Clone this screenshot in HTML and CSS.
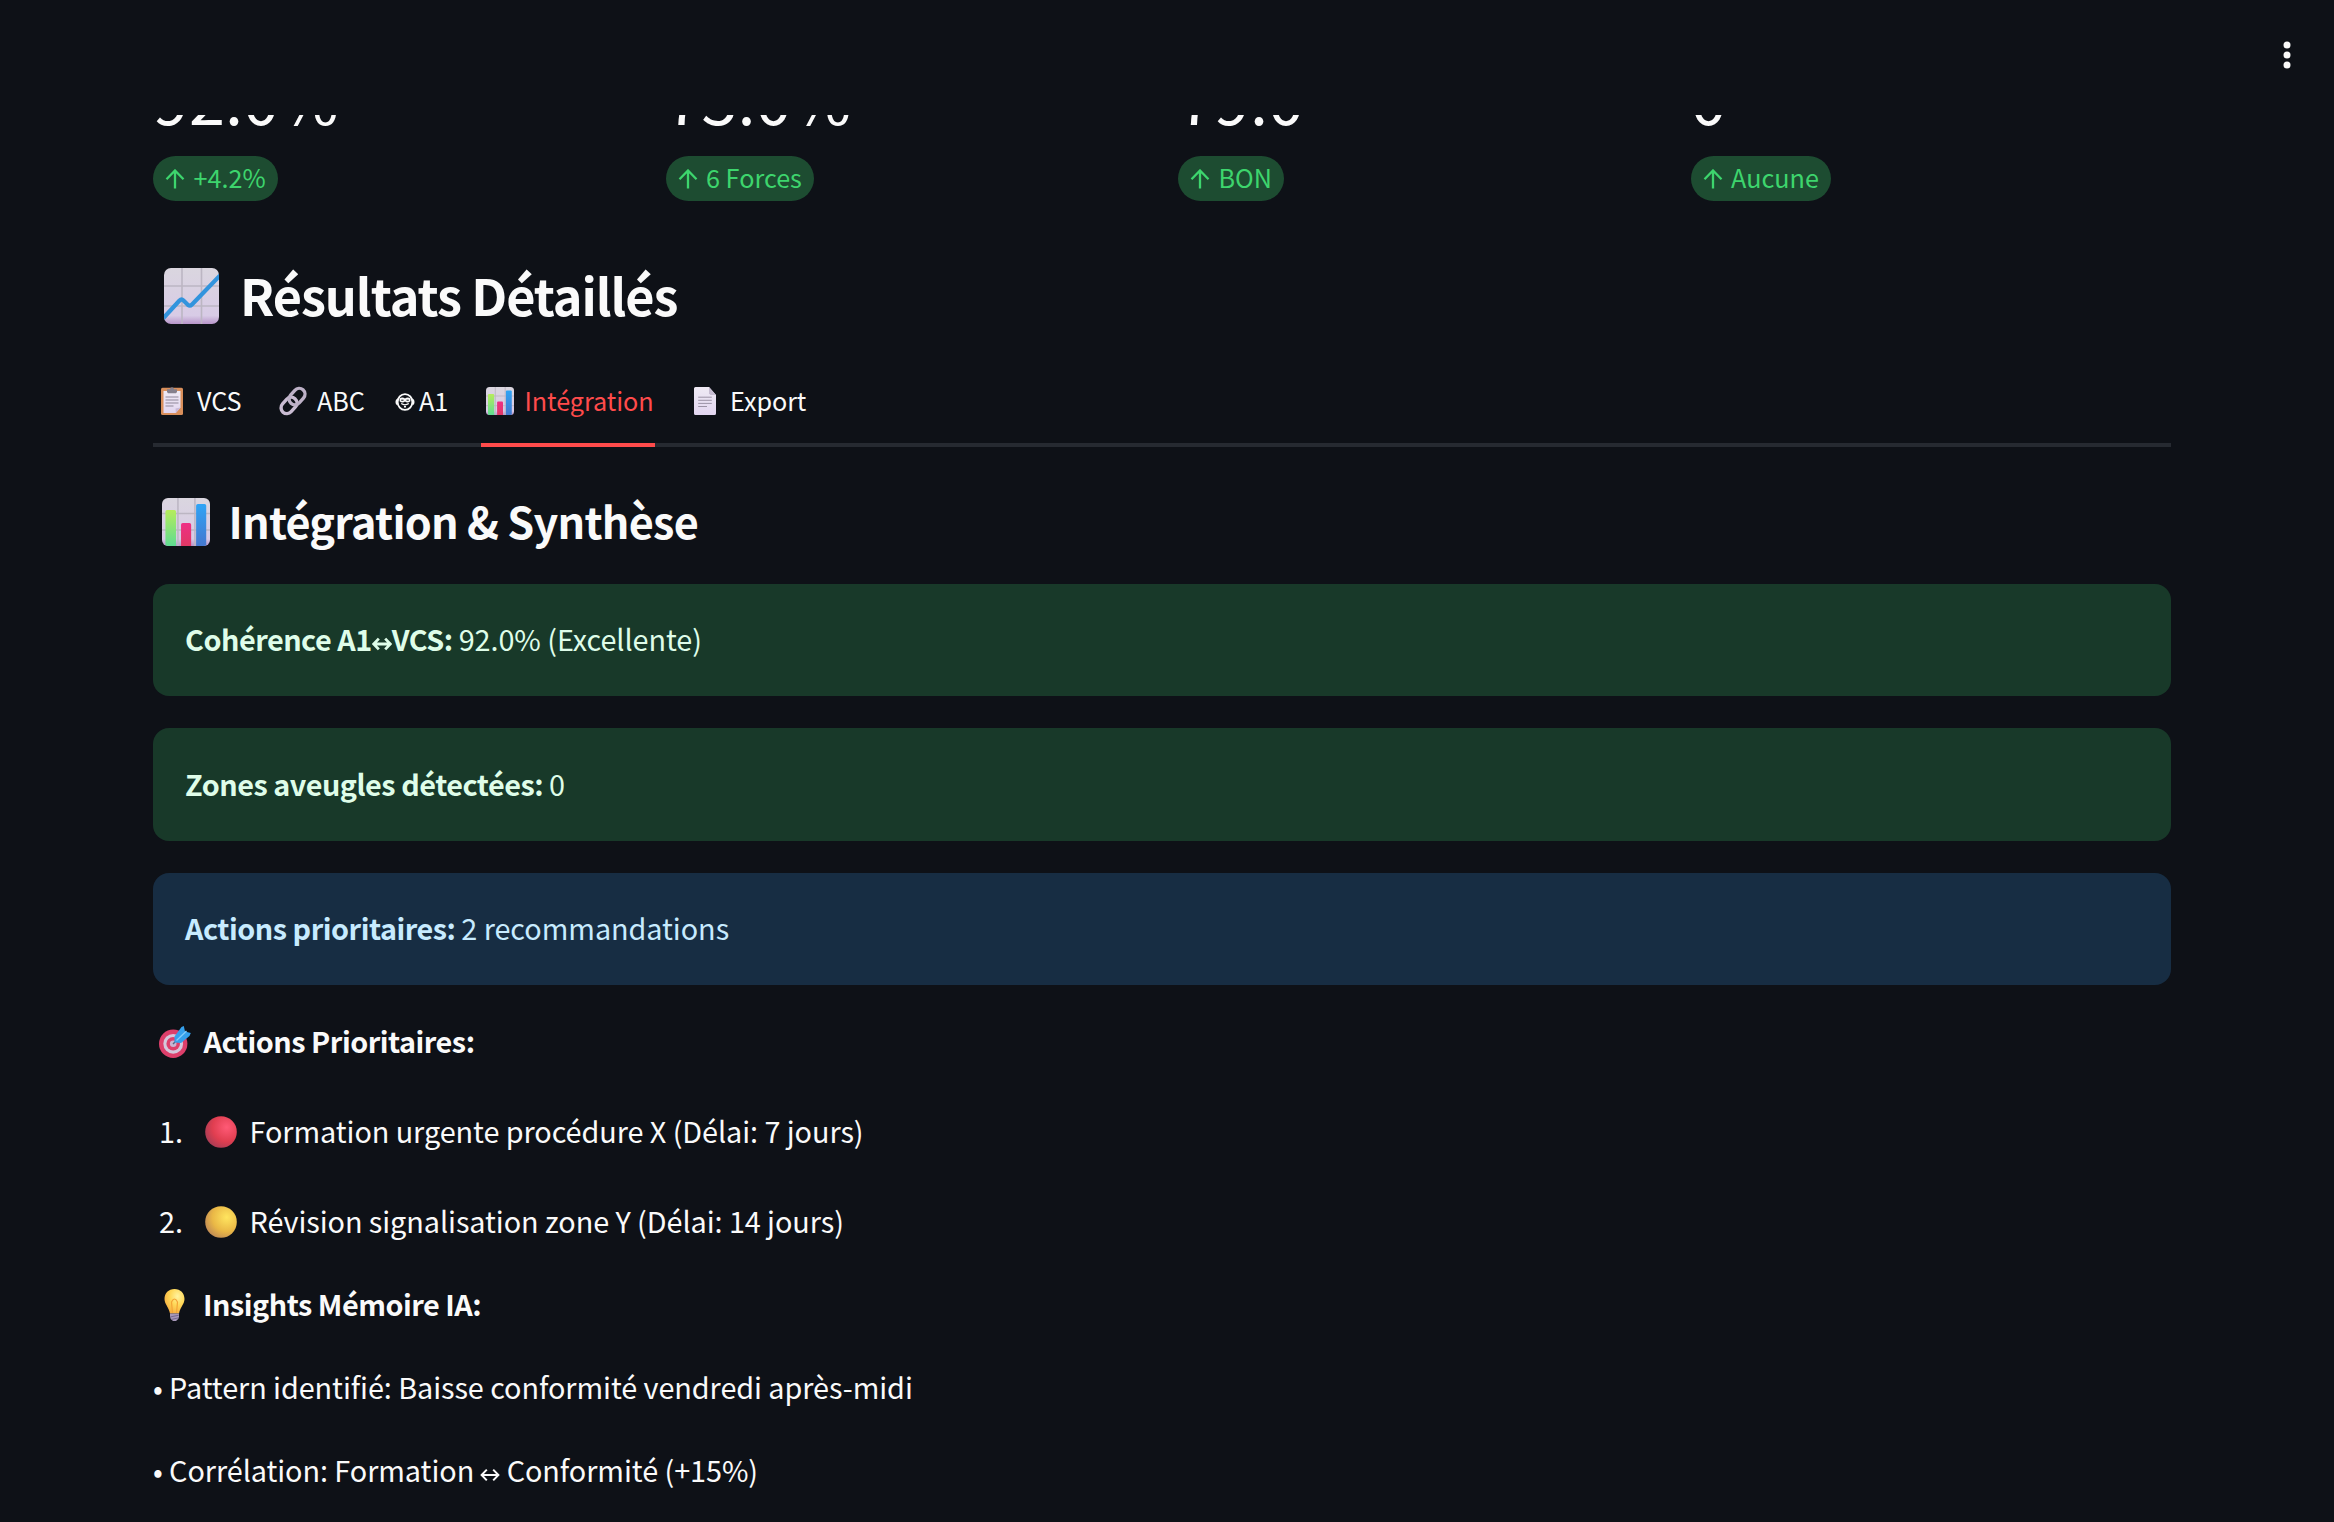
FILE: index.html
```html
<!DOCTYPE html>
<html lang="fr">
<head>
<meta charset="utf-8">
<title>Résultats Détaillés</title>
<link rel="stylesheet" href="styles.css">
</head>
<body>
<svg class="defs" width="0" height="0" aria-hidden="true">
  <defs>
    <linearGradient id="paper" x1="0" y1="0" x2="0" y2="1"><stop offset="0" stop-color="#dad6df"/><stop offset=".85" stop-color="#d8cbe6"/><stop offset="1" stop-color="#b795c9"/></linearGradient>
    <linearGradient id="sheet" x1="0" y1="0" x2="0" y2="1"><stop offset="0" stop-color="#efeaf4"/><stop offset="1" stop-color="#e2d6f0"/></linearGradient>
    <linearGradient id="green" x1="0" y1="0" x2="0" y2="1"><stop offset="0" stop-color="#b6ec5c"/><stop offset="1" stop-color="#5fdc92"/></linearGradient>
    <linearGradient id="blue" x1="0" y1="0" x2="0" y2="1"><stop offset="0" stop-color="#2fa4f5"/><stop offset="1" stop-color="#4478cf"/></linearGradient>
    <linearGradient id="pink" x1="0" y1="0" x2="0" y2="1"><stop offset="0" stop-color="#ee2f85"/><stop offset="1" stop-color="#e03864"/></linearGradient>
    <radialGradient id="red" cx=".68" cy=".35" r=".75"><stop offset="0" stop-color="#ff5a76"/><stop offset=".6" stop-color="#e03e50"/><stop offset="1" stop-color="#a83c55"/></radialGradient>
    <radialGradient id="yellow" cx=".68" cy=".35" r=".75"><stop offset="0" stop-color="#ffe55f"/><stop offset=".6" stop-color="#eab846"/><stop offset="1" stop-color="#c08a55"/></radialGradient>
    <radialGradient id="glow" cx=".65" cy=".3" r=".8"><stop offset="0" stop-color="#fff3a0"/><stop offset=".45" stop-color="#ffd858"/><stop offset="1" stop-color="#f5a73c"/></radialGradient>
    <clipPath id="chart"><rect width="55" height="56" rx="7"/></clipPath>
    <symbol id="bars" viewBox="0 0 28 28">
      <rect width="28" height="28" rx="3.5" fill="url(#paper)"/>
      <path d="M9.3 0v28M19.2 0v28M0 9h28M0 18.7h28" stroke="#bcb6c3" stroke-width=".9"/>
      <path d="M2 8a1 1 0 0 1 1-1h4.200a1 1 0 0 1 1 1v20H3.500L2 27.600z" fill="url(#green)"/>
      <path d="M11.100 15.600a1 1 0 0 1 1-1h3.900a1 1 0 0 1 1 1V28h-5.900z" fill="url(#pink)"/>
      <path d="M19.900 4.500a1 1 0 0 1 1-1h3.900a1 1 0 0 1 1 1v23.100L24.500 28h-4.600z" fill="url(#blue)"/>
    </symbol>
    <symbol id="up" viewBox="0 0 20 20"><path d="M10 19.500V2M1.500 10.300 10 1.500l8.500 8.800" fill="none" stroke="currentColor" stroke-width="2.300"/></symbol>
    <symbol id="both" viewBox="0 0 20 14"><path d="M2 7h16M6.800 1.600 1.600 7l5.200 5.400M13.200 1.600 18.400 7l-5.200 5.400" fill="none" stroke="currentColor"/></symbol>
  </defs>
</svg>

<header class="toolbar">
  <svg class="menu" viewBox="0 0 8 28"><circle cx="4" cy="4" r="3.500"/><circle cx="4" cy="14" r="3.500"/><circle cx="4" cy="24" r="3.500"/></svg>
</header>

<main class="content">
  <section class="metrics">
    <div class="metric"><div class="value">92.0%</div><div class="delta"><svg class="up"><use href="#up"/></svg><span>+4.2%</span></div></div>
    <div class="metric"><div class="value">75.0%</div><div class="delta"><svg class="up"><use href="#up"/></svg><span>6 Forces</span></div></div>
    <div class="metric"><div class="value">79.0</div><div class="delta"><svg class="up"><use href="#up"/></svg><span>BON</span></div></div>
    <div class="metric"><div class="value">0</div><div class="delta"><svg class="up"><use href="#up"/></svg><span>Aucune</span></div></div>
  </section>

  <h2 class="title">
    <svg class="title-icon" viewBox="0 0 55 56">
      <g clip-path="url(#chart)">
      <rect width="55" height="56" fill="url(#paper)"/>
      <path d="M18 0v56M37.500 0v56M0 18h55M0 38h55" stroke="#bcb6c3" stroke-width="1.600"/>
      <path d="M-1 50.500 15.500 32.500q2-2 4 0l4.500 4.500q2 1.500 4-.5L57 6.500" fill="none" stroke="#3294dd" stroke-width="4.200"/>
      </g>
    </svg>
    <span>Résultats Détaillés</span>
  </h2>

  <nav class="tabs">
    <a class="tab tab-vcs"><svg class="page-icon" viewBox="0 0 22 28">
      <rect y=".8" width="22" height="27.200" rx="1.500" fill="#d98f5b"/>
      <path d="M2.500 4h17v16.500L14.800 26H2.500z" fill="url(#sheet)"/><path d="M19.500 20.500 14.800 26l-.3-4.500z" fill="#c9b9d8"/>
      <path d="M4.500 10h13M4.500 13h13M4.500 16h13M4.500 19h8" stroke="#8f8799" stroke-width="1"/>
      <path d="M6 2.200h3a2 2 0 0 1 4 0h3V5l-1 1.200H7L6 5z" fill="#85808c"/></svg><span>VCS</span></a>
    <a class="tab tab-abc"><svg class="link-icon" viewBox="0 0 28 28">
      <g fill="none" stroke="#c9bcd2" stroke-width="3.400" transform="rotate(-48 14 14)"><rect x="-1" y="8.200" width="18" height="11.600" rx="5.800"/><rect x="11" y="8.200" width="18" height="11.600" rx="5.800" stroke="#bdb1c7"/></g></svg><span>ABC</span></a>
    <a class="tab tab-a1"><svg class="face-icon" viewBox="0 0 20 18">
      <g fill="none" stroke="#fafafa"><ellipse cx="10" cy="9" rx="7.400" ry="7.900" stroke-width="1.900"/><path d="M2.400 6.500Q1.200 7 1.200 9t1.200 2.500M17.600 6.500q1.200.5 1.200 2.500t-1.200 2.500" stroke-width="1.500"/><path d="M6.200 10.600q3.800 2.400 7.600 0" stroke-width="1.200"/></g><path d="M4.600 5.600q2.700-2 5.400 0 2.700-2 5.400 0v2.600q-2.700 2.200-5.400.3-2.700 1.900-5.400-.3z" fill="#fafafa"/><path d="M6.200 7.200h2.300M11.500 7.200h2.300" stroke="#0e1117" stroke-width="1"/><path d="M9 13.700h2" stroke="#fafafa" stroke-width="1.600"/></svg><span>A1</span></a>
    <a class="tab tab-int active"><svg class="bars-icon"><use href="#bars"/></svg><span>Intégration</span></a>
    <a class="tab tab-export"><svg class="page-icon" viewBox="0 0 22 28">
      <path d="M1.500 0H15l7 8v18.500a1.500 1.500 0 0 1-1.500 1.500h-19A1.500 1.500 0 0 1 0 26.500v-25A1.500 1.500 0 0 1 1.500 0z" fill="url(#sheet)"/><path d="M15 0v6.500L16.500 8H22z" fill="#c7bdd2"/>
      <path d="M4.200 10.200h13.600M4.200 13.300h13.600M4.200 16.400h13.600M4.200 19.500h8.800" stroke="#9b93a6" stroke-width="1"/></svg><span>Export</span></a>
  </nav>

  <h3 class="subtitle"><svg class="sub-icon"><use href="#bars"/></svg><span>Intégration &amp; Synthèse</span></h3>

  <div class="alerts">
    <div class="alert success"><b>Cohérence A1<svg class="both"><use href="#both"/></svg>VCS:</b><span>92.0% (Excellente)</span></div>
    <div class="alert success zones"><b>Zones aveugles détectées:</b><span>0</span></div>
    <div class="alert info"><b>Actions prioritaires:</b><span>2 recommandations</span></div>
  </div>

  <p class="row strong row-actions">
    <svg class="emoji target" viewBox="0 0 32 32">
      <circle cx="14.200" cy="17.800" r="14.200" fill="#dd3f6b"/><circle cx="14.200" cy="17.800" r="9.900" fill="#d5c7dc"/><circle cx="14.200" cy="17.800" r="6.800" fill="#dd3f6b"/><circle cx="14.200" cy="17.800" r="3.300" fill="#c9b4d2"/>
      <path d="m14 18 9-9" stroke="#54657f" stroke-width="1.500"/><path d="M15.500 16.500v-6L22.500 1l2.300-1 1.200 5.500 5.800 1.400-1.300 3.200-8.500 7z" fill="#35a0ec"/><path d="m17.500 14.500 10-9.500" stroke="#83ccfa" stroke-width="1.300"/></svg>
    <span>Actions Prioritaires:</span></p>
  <div class="list">
    <div class="item"><span class="num">1.</span><svg class="dot" viewBox="0 0 32 32"><circle cx="16" cy="16" r="15.800" fill="url(#red)"/></svg><span>Formation urgente procédure X (Délai: 7 jours)</span></div>
    <div class="item"><span class="num">2.</span><svg class="dot" viewBox="0 0 32 32"><circle cx="16" cy="16" r="15.800" fill="url(#yellow)"/></svg><span>Révision signalisation zone Y (Délai: 14 jours)</span></div>
  </div>
  <p class="row strong row-insights">
    <svg class="emoji bulb" viewBox="0 0 21 32">
      <path d="M10.500 0C4.500 0 .5 4.300.5 10c0 5 4 7.500 5.500 14.500h9C16.500 17.500 20.500 15 20.500 10c0-5.700-4-10-10-10z" fill="url(#glow)"/><path d="M8.500 24 7.500 13q3-6 6 0l-1 11" fill="none" stroke="#f3a537" stroke-width="1.200"/>
      <path d="M6 24.500h9v3l-.7 2.500-2.300 2H9l-2.300-2-.7-2.500z" fill="#a697b8"/><path d="m6.200 28 8.600-1.800M7 30.500l7.300-1.600" stroke="#75678c" stroke-width="1"/></svg>
    <span>Insights Mémoire IA:</span></p>
  <p class="row">• Pattern identifié: Baisse conformité vendredi après-midi</p>
  <p class="row correlation">• Corrélation: Formation<svg class="both"><use href="#both"/></svg>Conformité (+15%)</p>
</main>
</body>
</html>
```
FILE: styles.css
```css
* { box-sizing: border-box; }
html, body { height: 100%; }
body {
  margin: 0;
  background: #0e1117;
  color: #fafafa;
  font-family: "Noto Sans CJK JP", "Noto Sans", sans-serif;
  font-size: 28.8px;
  line-height: 48px;
  letter-spacing: -0.06px;
  overflow: hidden;
  display: flex;
  flex-direction: column;
}
.defs { display: block; flex: none; height: 0; }
svg { display: block; flex: none; overflow: visible; }
span, b { white-space: nowrap; }
.toolbar { flex: none; height: 115px; padding: 41px 43px 0 0; display: flex; justify-content: flex-end; }
.menu { width: 8px; height: 28px; fill: #fafafa; }
.content { flex: 1; min-height: 0; overflow: hidden; padding: 0 163px 0 153px; }

.metrics { display: grid; grid-template-columns: repeat(4, 1fr); gap: 32px; }
.value { font-size: 64.8px; line-height: 80px; margin: -58px 0 19px; letter-spacing: 0; }
.delta {
  display: flex; width: fit-content; align-items: center; gap: 8.5px; height: 45px;
  padding: 0 12.5px 0 12px; border-radius: 22.5px;
  background: #1d4c31; color: #3dd56d; font-size: 25.2px; line-height: 44px;
  letter-spacing: 0;
}
.delta span { margin-top: -3px; }
.up { width: 20px; height: 20px; }

.title { display: flex; align-items: center; margin: 64px 0 0; padding-left: 11px; height: 60px; font-size: 50.4px; line-height: 60px; font-weight: 700; letter-spacing: -1.06px; }
.title-icon { width: 55px; height: 56px; margin: 2px 21px 0 0; }

.tabs { display: flex; height: 77px; margin-top: 45px; border-bottom: 4px solid #262a31; font-size: 25.2px; line-height: 40px; }
.tab { display: flex; align-items: flex-start; padding-top: 10px; height: 77px; }
.tab svg { margin-top: 7px; }
.page-icon { width: 22px; height: 28px; margin-right: 14px; }
.link-icon, .bars-icon { width: 28px; height: 28px; }
.face-icon { width: 20px; height: 18px; }
.tab .face-icon { margin-top: 13px; margin-right: 4px; }
.tab-vcs { width: 126px; padding-left: 8px; }
.tab-abc { width: 116px; }
.link-icon { margin-right: 10px; }
.tab-a1 { width: 86px; }
.tab-int { width: 174px; padding-left: 5px; }
.bars-icon { margin-right: 10.5px; }
.active { color: #ff4b4b; border-bottom: 4px solid #ff4b4b; }
.tab-export { margin-left: 39px; }

.subtitle { display: flex; align-items: center; margin: 43px 0 0; padding-left: 9px; height: 60px; font-size: 43.2px; line-height: 60px; font-weight: 700; letter-spacing: -0.76px; }
.sub-icon { width: 48px; height: 48px; margin: 4px 18.5px 0 0; }

.alerts { display: flex; flex-direction: column; gap: 32px; margin-top: 34px; }
.alert { display: flex; align-items: center; gap: 6px; height: 112px; padding: 0 32px 3px; border-radius: 16px; }
.zones { height: 113px; padding-bottom: 1px; }
.alert b, .strong { letter-spacing: -0.48px; }
.success { background: #183929; color: #dffde9; }
.info { background: #172d43; color: #c7ebff; }
.both { display: inline-block; width: 20px; height: 14px; stroke-width: 2; }
.alert .both { stroke-width: 2.8; }

.row { margin: 0 0 35px; height: 48px; white-space: nowrap; }
.strong { display: flex; align-items: center; font-weight: 700; }
.row-actions { margin-top: 32px; padding-left: 6px; }
.emoji, .dot { margin-top: 1px; }
.target { width: 32px; height: 32px; margin-right: 12.5px; }
.list { display: flex; flex-direction: column; gap: 42px; padding-top: 7px; margin: 0 0 35px; }
.item { display: flex; align-items: center; height: 48px; padding-left: 6px; }
.num { width: 46px; }
.dot { width: 32px; height: 32px; margin-right: 12.5px; }
.row-insights { padding-left: 11px; }
.bulb { width: 21px; height: 32px; margin-right: 18px; }
.correlation .both { margin: 0 6.5px 0 6px; }
```
